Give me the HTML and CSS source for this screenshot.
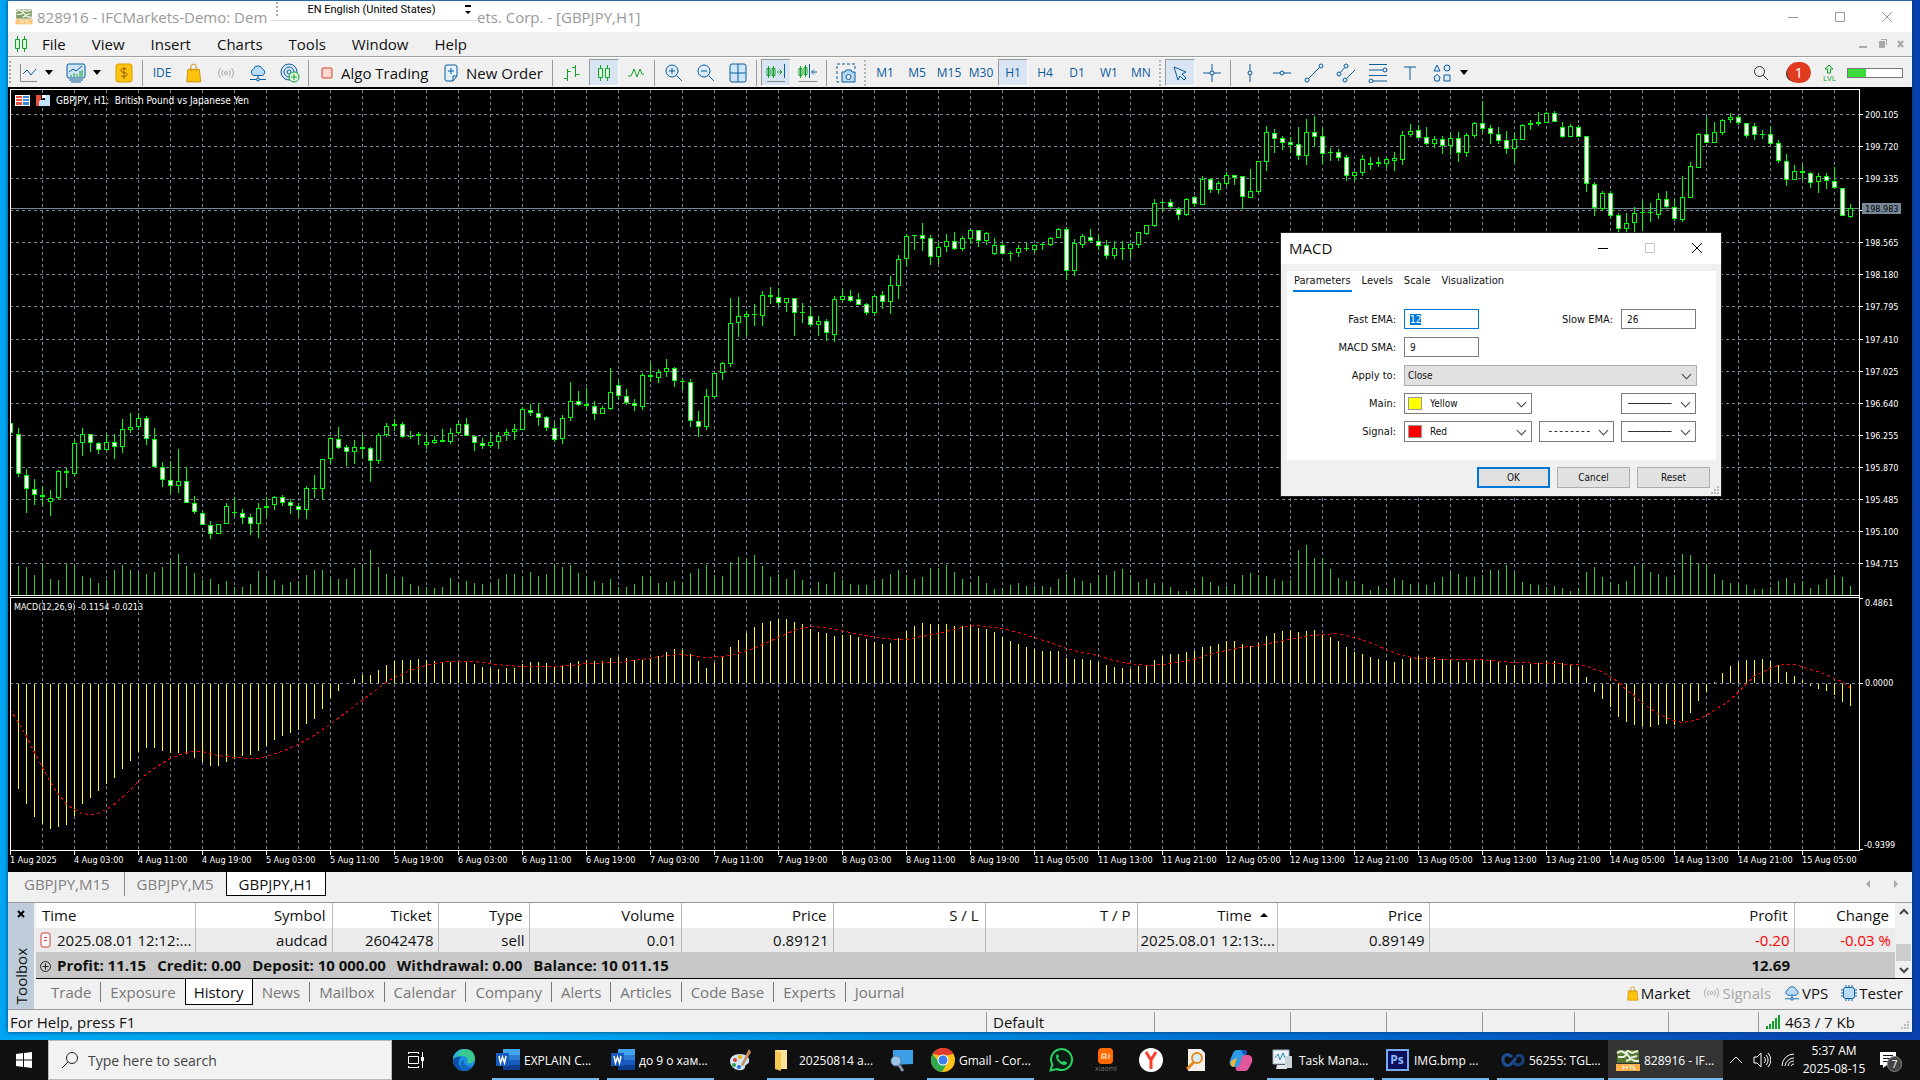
FILE: index.html
```html
<!DOCTYPE html>
<html lang="en">
<head>
<meta charset="utf-8">
<title>828916 - IFCMarkets-Demo - [GBPJPY,H1]</title>
<link rel="stylesheet" href="styles.css">
</head>
<body class="desktop">
<svg class="defs" aria-hidden="true">
  <symbol id="i-bag" viewBox="0 0 18 22"><path d="M2 7h13l1.500 14H1z" fill="#ffc20e" stroke="#c58a00"/><path d="M5.500 9V4a3 3 0 0 1 6 0v5" fill="none" stroke="#c58a00"/></symbol>
  <symbol id="i-signal" viewBox="0 0 18 14"><g fill="none" stroke="currentColor"><circle cx="9" cy="7" r="1.500"/><path d="M6 4a4.500 4.500 0 0 0 0 6M12 4a4.500 4.500 0 0 1 0 6M3.500 2a7.500 7.500 0 0 0 0 10M14.500 2a7.500 7.500 0 0 1 0 10"/></g></symbol>
  <symbol id="i-cloud" viewBox="0 0 18 18"><path d="M4.500 11.500a3.500 3.500 0 0 1 0-6.500 4.800 4.800 0 0 1 9 0 3.500 3.500 0 0 1 0 6.500z" fill="#b9dcfa" stroke="#0b62a8"/><path d="M9 11.500V15M1 15.500h16" stroke="#0b62a8"/><circle cx="9" cy="15.500" r="1.500" fill="#b9dcfa" stroke="#0b62a8"/></symbol>
  <symbol id="i-mt" viewBox="0 0 24 24"><path d="M1 2h22v13H1z" fill="#55792f"/><path d="M1 5l4-2 4 2 3-2 4 2 6-2M2 9h6l3-3 3 4 7-2M10 13l5-2 4 2h4" fill="none" stroke="#e7f0dc" stroke-width="2"/><path d="M0 16h24v7H0z" fill="#ffb04a"/><path d="M7 17.500v4M7 18l2 2 2-2v3.500M13 18h3M14.500 18v3.500M18 18h-1v2h2v1.500h-2" fill="none" stroke="#fff4dd"/></symbol>
  <symbol id="i-word" viewBox="0 0 24 24"><path d="M7 1h17v6H7z" fill="#41a5ee"/><path d="M7 7h17v5H7z" fill="#2b7cd3"/><path d="M7 12h17v5H7z" fill="#185abd"/><path d="M7 17h17v5H7z" fill="#103f91"/><path d="M0 5h13v13H0z" fill="#185abd"/><path d="M3 8l1.500 7L6.500 9l2 6L10 8" fill="none" stroke="#fff" stroke-width="1.500"/></symbol>
  <symbol id="i-candles" viewBox="0 0 14 18"><g fill="#d8ffd8" stroke="#12a12b"><path d="M3.500 1v16M10.500 1v16" /><path d="M1.500 4.500h4v9h-4zM8.500 4.500h4v9h-4z"/></g></symbol>
</svg>

<main class="app">
  <header class="titlebar">
    <svg class="ico-18"><use href="#i-mt"/></svg>
    <span class="title lead">828916 - IFCMarkets-Demo: Dem</span>
    <div class="langbar"><i class="grip"></i><span>EN English (United States)</span><svg width="6" height="12"><path d="M0 1h6v2H0zM0 7h6L3 10z"/></svg></div>
    <span class="title">ets. Corp. - [GBPJPY,H1]</span>
    <div class="win-buttons">
      <button aria-label="Minimize"><svg width="12" height="12"><path d="M1 6.500h10"/></svg></button>
      <button aria-label="Maximize"><svg width="12" height="12"><path d="M1.500 1.500h9v9h-9z"/></svg></button>
      <button aria-label="Close"><svg width="12" height="12"><path d="M1 1l10 10M11 1L1 11"/></svg></button>
    </div>
  </header>

  <nav class="menubar">
    <svg width="14" height="18"><use href="#i-candles"/></svg>
    <a href="#">File</a><a href="#">View</a><a href="#">Insert</a><a href="#">Charts</a><a href="#">Tools</a><a href="#">Window</a><a href="#">Help</a>
    <div class="mdi-buttons"><svg width="48" height="12"><path d="M1 8h8v2H1zM21 3h6v7h-6zM23 1h6v6h-1V2h-5z"/><path d="M40 3l5 6M45 3l-5 6" stroke="#a8a8a8" stroke-width="2"/></svg></div>
  </nav>

  <div class="toolbar">
    <i class="grip"></i>
    <button class="tool t30" aria-label="Chart type"><svg width="18" height="20"><path d="M1.500 1v17.500H18" stroke="#8a8a8a"/><path d="M4 11l4-4 4 5 5-6"/></svg></button>
    <span class="caret"></span>
    <button class="tool t30 t-shift" aria-label="Templates"><svg width="20" height="20"><rect x="1" y="1" width="18" height="14" rx="2" fill="#cfe6fa"/><path d="M3 9l4-3 3 2 6-5M3 17h14M5 19h10"/><path d="M5 14v-2M8 14v-4M11 14v-3M14 14V8M16 14V7" stroke="#12a12b"/></svg></button>
    <span class="caret"></span>
    <button class="tool" aria-label="Quotes"><svg width="18" height="20"><rect x="1" y="1" width="16" height="18" rx="2" fill="#ffc20e" stroke="#d79a00"/><path d="M12 6.500c-1-1.500-6-1.500-6 1s6 1.500 6 4-5 2.500-6 1M9 4v12" stroke="#8a5b00"/></svg></button>
    <i class="sep"></i>
    <button class="tool">IDE</button>
    <button class="tool" aria-label="Market"><svg width="16" height="20"><use href="#i-bag"/></svg></button>
    <button class="tool gray" aria-label="Signals"><svg width="18" height="14"><use href="#i-signal"/></svg></button>
    <button class="tool" aria-label="VPS"><svg width="18" height="18"><use href="#i-cloud"/></svg></button>
    <button class="tool" aria-label="Subscribe"><svg width="20" height="20"><circle cx="9" cy="9" r="8" fill="#dcecfb"/><circle cx="9" cy="9" r="5"/><circle cx="9" cy="9" r="2"/><circle cx="14" cy="14" r="5" fill="#e6ffe6" stroke="#12a12b"/><path d="M14 11v6M11 14h6" stroke="#12a12b"/></svg></button>
    <i class="sep"></i>
    <button class="tool wide w-algo"><svg width="12" height="12"><rect x="1" y="1" width="10" height="10" rx="1" fill="#ffd9d0" stroke="#d2402c"/></svg>Algo Trading</button>
    <button class="tool wide w-order"><svg width="14" height="18"><path d="M1 3a2 2 0 0 1 2-2h8a2 2 0 0 1 2 2v9l-4 5H3a2 2 0 0 1-2-2zM13 12H9v5" fill="#e3f1fd"/><path d="M7 4v6M4 7h6"/></svg>New Order</button>
    <i class="sep"></i>
    <button class="tool" aria-label="Bars"><svg width="18" height="18"><g stroke="#12a12b"><path d="M4.500 5v12M1 14.500h3M4.500 7.500h3M12.500 1v12M9 3.500h3M12.500 10.500h4"/></g></svg></button>
    <button class="tool on" aria-label="Candles"><svg width="14" height="18"><use href="#i-candles"/></svg></button>
    <button class="tool" aria-label="Line"><svg width="18" height="14"><path d="M1 10h3l3-7 3 8 3-8 2 5h2" stroke="#12a12b"/></svg></button>
    <i class="sep"></i>
    <button class="tool" aria-label="Zoom in"><svg width="18" height="20"><circle cx="7" cy="8" r="6" fill="#dcecfb"/><path d="M11.500 12.500L17 18M7 5v6M4 8h6"/></svg></button>
    <button class="tool" aria-label="Zoom out"><svg width="18" height="20"><circle cx="7" cy="8" r="6" fill="#dcecfb"/><path d="M11.500 12.500L17 18M4 8h6"/></svg></button>
    <button class="tool" aria-label="Tile"><svg width="18" height="20"><rect x="1" y="1" width="16" height="18" rx="2" fill="#cfe6fa"/><path d="M9 1v18M1 10h16"/></svg></button>
    <i class="sep"></i>
    <button class="tool on" aria-label="Auto scroll"><svg width="20" height="20"><g stroke="#12a12b"><path d="M2.500 3v12M1 5.500h3v7H1zM7.500 3v12M6 5.500h3v7H6zM11 9h5M13.500 6.500L16 9l-2.500 2.500"/></g><path d="M18.500 1v14"/><path d="M1 18.500h18" stroke="#8a8a8a"/></svg></button>
    <button class="tool" aria-label="Chart shift"><svg width="20" height="20"><g stroke="#12a12b"><path d="M2.500 3v12M1 5.500h3v7H1zM7.500 2v12M6 4.500h3v7H6z"/></g><path d="M11.500 1v14M19 9h-5M16 6.500L13.500 9l2.500 2.500"/><path d="M1 18.500h18" stroke="#8a8a8a"/></svg></button>
    <i class="sep"></i>
    <button class="tool" aria-label="Screenshot"><svg width="20" height="20"><path d="M19 6V1H1v18h4" stroke-dasharray="3 2"/><path d="M6 9h3l1-2h5l1 2h3v10H6z" fill="#b9dcfa"/><circle cx="12.500" cy="14" r="2.500" fill="#fff"/></svg></button>
    <i class="sep dots"></i>
    <button class="tool">M1</button><button class="tool">M5</button><button class="tool">M15</button><button class="tool">M30</button><button class="tool on">H1</button><button class="tool">H4</button><button class="tool">D1</button><button class="tool">W1</button><button class="tool">MN</button>
    <i class="sep dots"></i>
    <button class="tool on" aria-label="Cursor"><svg width="16" height="16"><path d="M2 2l12 5-4 2 4 4-2 2-4-4-2 4z" fill="#dcecfb"/></svg></button>
    <button class="tool" aria-label="Crosshair"><svg width="18" height="18"><path d="M9 0v18M0 9h18"/><circle cx="9" cy="9" r="2" fill="#dcecfb"/></svg></button>
    <i class="sep"></i>
    <button class="tool" aria-label="Vertical line"><svg width="18" height="20"><path d="M9 1v18"/><circle cx="9" cy="10" r="2" fill="#dcecfb"/></svg></button>
    <button class="tool" aria-label="Horizontal line"><svg width="20" height="18"><path d="M1 9h18"/><circle cx="10" cy="9" r="2" fill="#dcecfb"/></svg></button>
    <button class="tool" aria-label="Trendline"><svg width="20" height="20"><path d="M3 17L17 3"/><circle cx="3" cy="17" r="2" fill="#dcecfb"/><circle cx="17" cy="3" r="2" fill="#dcecfb"/></svg></button>
    <button class="tool" aria-label="Channel"><svg width="20" height="20"><path d="M3 11l7-8M9 17L19 7"/><circle cx="3" cy="11" r="2" fill="#dcecfb"/><circle cx="10" cy="3" r="2" fill="#dcecfb"/><circle cx="9" cy="17" r="2" fill="#dcecfb"/></svg></button>
    <button class="tool" aria-label="Fibonacci"><svg width="20" height="20"><path d="M1 1.500h18M1 7h18M1 12.500h18M1 18h18"/><circle cx="17" cy="7" r="2" fill="#dcecfb"/><circle cx="3" cy="18" r="2" fill="#dcecfb"/></svg></button>
    <button class="tool" aria-label="Text"><svg width="14" height="14"><path d="M1 1h12M7 1v13"/></svg></button>
    <button class="tool" aria-label="Shapes"><svg width="18" height="18"><g fill="#dcecfb"><path d="M1 7l3-6 3 6z"/><circle cx="14" cy="4" r="3"/><path d="M4 10.500l3 2.500-1 4H2l-1-4z"/><path d="M11 11h6v6h-6z"/></g></svg></button>
    <span class="caret"></span>
    <div class="tool-right">
      <svg width="16" height="16"><circle cx="6.500" cy="6.500" r="5" stroke="#333"/><path d="M10 10l5 5" stroke="#333"/></svg>
      <span class="badge">1</span>
      <span class="lvl"><svg width="12" height="10"><path d="M6 1L2 5h2.500v4h3V5H10z" fill="#d8ffd8" stroke="#12a12b"/></svg>LVL</span>
      <meter class="load" min="0" max="3" value="1">33%</meter>
    </div>
  </div>

  <section class="chart">
    <svg id="chart" class="plot" role="img" aria-label="GBPJPY H1 chart"></svg>

    <form class="dialog" onsubmit="return false">
      <div class="dlg-title"><span>MACD</span>
        <svg width="106" height="12"><path d="M1 6.500h10" stroke="#000"/><path d="M48.500 1.500h9v9h-9z" stroke="#c8c8c8"/><path d="M95 1l10 10M105 1L95 11" stroke="#000"/></svg>
      </div>
      <div class="dlg-panel">
        <div class="dlg-tabs"><a class="cur" href="#">Parameters</a><a href="#">Levels</a><a href="#">Scale</a><a href="#">Visualization</a></div>
        <div class="dlg-grid">
          <label for="fast">Fast EMA:</label><input class="field" id="fast" value="12" autofocus>
          <label for="slow" class="c3">Slow EMA:</label><input class="field" id="slow" value="26">
          <label for="sma">MACD SMA:</label><input class="field c2" id="sma" value="9">
          <label for="apply" class="c1">Apply to:</label><div class="combo span3 filled"><select id="apply"><option>Close</option></select></div>
          <label for="main" class="c1">Main:</label><div class="combo sw"><i class="swatch yellow"></i><select id="main"><option>Yellow</option></select></div>
          <div class="combo c4"><select aria-label="Main width"><option>────────</option></select></div>
          <label for="sig" class="c1">Signal:</label><div class="combo sw"><i class="swatch red"></i><select id="sig"><option>Red</option></select></div>
          <div class="combo"><select aria-label="Signal style"><option>╶╶╶╶╶╶╶╶</option></select></div>
          <div class="combo"><select aria-label="Signal width"><option>────────</option></select></div>
        </div>
      </div>
      <div class="dlg-foot"><button class="btn primary">OK</button><button class="btn">Cancel</button><button class="btn">Reset</button></div>
      <svg class="gripper" width="9" height="9"><path d="M6 0h2v2H6zM3 3h2v2H3zM6 3h2v2H6zM0 6h2v2H0zM3 6h2v2H3zM6 6h2v2H6z" fill="#bbb"/></svg>
    </form>
  </section>

  <nav class="chart-tabs">
    <a href="#">GBPJPY,M15</a><a href="#">GBPJPY,M5</a><a class="cur" href="#">GBPJPY,H1</a>
    <svg width="36" height="10"><path d="M5 1v8L1 5zM29 1v8l4-4z" fill="#a8a8a8"/></svg>
  </nav>

  <section class="toolbox">
    <aside class="tb-strip"><button aria-label="Close toolbox"><svg width="8" height="8"><path d="M1 1l6 6M7 1L1 7" stroke="#000" stroke-width="2"/></svg></button><span>Toolbox</span></aside>
    <div class="tb-main">
      <div class="tb-data">
        <table class="deals">
          <colgroup><col class="w159"><col class="w137"><col class="w106"><col class="w91"><col class="w152"><col class="w152"><col class="w152"><col class="w152"><col class="w140"><col class="w152"><col><col class="w101"></colgroup>
          <thead><tr><th class="l">Time</th><th>Symbol</th><th>Ticket</th><th>Type</th><th>Volume</th><th>Price</th><th>S / L</th><th>T / P</th><th>Time <span class="sort"></span></th><th>Price</th><th>Profit</th><th>Change</th></tr></thead>
          <tbody>
            <tr><td class="l"><svg width="12" height="16"><rect x="1" y="1" width="9" height="14" rx="2" fill="#fff" stroke="#d23a3a"/><path d="M4 5.500h3M4 8.500h3" stroke="#d23a3a"/></svg>2025.08.01 12:12:...</td><td>audcad</td><td>26042478</td><td>sell</td><td>0.01</td><td>0.89121</td><td></td><td></td><td class="tight">2025.08.01 12:13:...</td><td>0.89149</td><td class="neg">-0.20</td><td class="neg">-0.03 %</td></tr>
            <tr class="sum"><td colspan="10" class="l"><svg width="12" height="12"><g fill="none" stroke="#222"><circle cx="5.500" cy="5.500" r="5"/><path d="M5.500 2.500v6M2.500 5.500h6"/></g></svg><span>Profit: 11.15</span><span>Credit: 0.00</span><span>Deposit: 10 000.00</span><span>Withdrawal: 0.00</span><span>Balance: 10 011.15</span></td><td>12.69</td><td></td></tr>
          </tbody>
        </table>
        <div class="scroll"><svg width="10" height="8"><path d="M1 6l4-4 4 4"/></svg><i></i><svg width="10" height="8"><path d="M1 2l4 4 4-4"/></svg></div>
      </div>
      <nav class="tb-tabs">
        <a href="#">Trade</a><a href="#">Exposure</a><a class="cur" href="#">History</a><a href="#">News</a><a href="#">Mailbox</a><a href="#">Calendar</a><a href="#">Company</a><a href="#">Alerts</a><a href="#">Articles</a><a href="#">Code Base</a><a href="#">Experts</a><a href="#">Journal</a>
        <div class="tb-links">
          <button><svg width="12" height="15"><use href="#i-bag"/></svg>Market</button>
          <button class="gray"><svg width="17" height="14"><use href="#i-signal"/></svg>Signals</button>
          <button><svg width="16" height="16"><use href="#i-cloud"/></svg>VPS</button>
          <button><svg width="16" height="16"><path d="M5 0v16M8 0v16M11 0v16M0 5h16M0 8h16M0 11h16" stroke="#0b62a8"/><rect x="2.500" y="2.500" width="11" height="11" rx="2" fill="#b9dcfa" stroke="#0b62a8"/></svg>Tester</button>
        </div>
      </nav>
    </div>
  </section>

  <footer class="status">
    <span class="grow">For Help, press F1</span><span class="s168">Default</span><span class="s136"></span><span class="s96"></span><span class="s96"></span><span class="s92"></span><span class="s94"></span><span class="s90"></span>
    <span class="s154"><svg width="16" height="14"><path d="M1 11h2v3H1zM4 9h2v5H4zM7 6h2v8H7zM10 3h2v11h-2zM13 0h2v14h-2z" fill="#12a12b"/></svg>463 / 7 Kb<svg class="push" width="9" height="9"><path d="M6 0h2v2H6zM3 3h2v2H3zM6 3h2v2H6zM0 6h2v2H0zM3 6h2v2H3zM6 6h2v2H6z" fill="#bbb"/></svg></span>
  </footer>
</main>

<footer class="taskbar">
  <button class="start" aria-label="Start"><svg width="16" height="16" fill="#fff"><path d="M0 2l7-1v6.500H0zM8 1l8-1v7.500H8zM0 8.500h7V15l-7-1zM8 8.500h8V16l-8-1z"/></svg></button>
  <label class="search"><svg width="18" height="18"><circle cx="11" cy="7" r="5.500" fill="none" stroke="#222"/><path d="M7 11l-6 6" stroke="#222"/></svg><input placeholder="Type here to search"></label>
  <button class="task t48" aria-label="Task view"><svg width="18" height="16"><g fill="none" stroke="#fff"><path d="M1 .5h11M1 15.500h11M1.500 0v2M11.500 0v2M1.500 14v2M11.500 14v2M1.500 4.500h10v7h-10zM15.500 0v16"/></g><path d="M14 5h3v4h-3z" fill="#fff"/></svg></button>
  <button class="task t48" aria-label="Edge"><svg width="24" height="24"><circle cx="12" cy="12" r="11" fill="#1b8fe0"/><path d="M1 11C2 4 8 1 13 1c7 0 10 5 10 9 0 4-4 6-8 5 2-3 0-7-5-7-4 0-8 1-9 3z" fill="#39c98f"/><path d="M1 10C3 4 8 1 12 1c-3 1-6 3-6 7-2 0-4 1-5 2z" fill="#27b3d8"/><path d="M9 9c-4 3-3 11 4 14-7 0-12-5-12-11 2-3 6-4 8-3z" fill="#0e4fa6"/><path d="M12 12c-1 4 3 8 9 6-2 3-5 5-9 5-5-3-4-10 0-11z" fill="#1464c0"/></svg></button>
  <button class="task lab"><svg width="24" height="24"><use href="#i-word"/></svg>EXPLAIN C...</button>
  <button class="task lab"><svg width="24" height="24"><use href="#i-word"/></svg>до 9 о хам...</button>
  <button class="task" aria-label="Paint"><svg width="24" height="24"><path d="M11 6c7 0 10 4 9 8-1 3-4 2-4 5 0 2-3 4-7 3-5-1-8-5-8-9 0-4 4-7 10-7z" fill="#cfe3f2"/><circle cx="6" cy="12" r="2" fill="#e23b2e"/><circle cx="11" cy="9" r="2" fill="#f0b400"/><circle cx="5" cy="17" r="2" fill="#2da44e"/><circle cx="10" cy="19" r="2" fill="#2f6fdb"/><path d="M20 1l2 3-8 14-2-1z" fill="#c98d55"/></svg></button>
  <button class="task lab"><svg width="24" height="24"><path d="M4 2h12v19H4z" fill="#ffe29a"/><path d="M4 2l6 3v18l-6-2z" fill="#f3c84f"/></svg>20250814 a...</button>
  <button class="task" aria-label="Search tool"><svg width="24" height="24"><path d="M4 2h20v14l-20 1z" fill="#3d9fe8"/><circle cx="7" cy="13" r="5" fill="#9cc7ea" stroke="#5e7d99"/><path d="M10 17l4 6" stroke="#8397a8" stroke-width="3"/></svg></button>
  <button class="task lab"><svg width="24" height="24"><circle cx="12" cy="12" r="12" fill="#fbc116"/><path d="M1.600 6A12 12 0 0 1 22.400 6L12 8z" fill="#e33b2e"/><path d="M12 0a12 12 0 0 1 10.400 6H12z" fill="#e33b2e"/><path d="M1.600 6A12 12 0 0 0 11 24l4-7-7-3z" fill="#2da94f"/><circle cx="12" cy="12" r="5.500" fill="#fff"/><circle cx="12" cy="12" r="4.500" fill="#3b7ded"/></svg>Gmail - Cor...</button>
  <button class="task" aria-label="WhatsApp"><svg width="24" height="24"><path d="M1.500 22.500l1.800-6A10.500 10.500 0 1 1 8 21z" fill="#0b1d12" stroke="#25d366" stroke-width="2"/><path d="M8 6c-3 3 2 11 8 11 3-1 2-3 1-3l-2-1-2 1c-2-1-3-2-4-4l1-2z" fill="#25d366"/></svg></button>
  <button class="task" aria-label="Xiaomi"><svg width="24" height="24"><rect x="4" y="0" width="15" height="16" rx="4" fill="#ff6900"/><path d="M8 11V6h4v5M10 8v3M15 6v5" fill="none" stroke="#fff"/><text x="12" y="23" class="mi">xiaomi</text></svg></button>
  <button class="task" aria-label="Yandex"><svg width="24" height="24"><circle cx="12" cy="12" r="12" fill="#fff"/><path d="M7 4l5 8 5-8M12 12v9" fill="none" stroke="#f8402a" stroke-width="3"/></svg></button>
  <button class="task" aria-label="Document search"><svg width="24" height="24"><path d="M4 1h13l4 4v18H4z" fill="#f4f1ea"/><circle cx="13" cy="10" r="5" fill="#d9ecfa" stroke="#e58a1f" stroke-width="2"/><path d="M10 14l-7 7" stroke="#e58a1f" stroke-width="3"/></svg></button>
  <button class="task" aria-label="Copilot"><svg width="24" height="24"><path d="M8 2h7c2 0 3 2 3 4l-3 1-4 12H5c-4 0-5-4-4-7L4 5c1-2 2-3 4-3z" fill="#2b9be8"/><path d="M16 7h3c4 0 5 4 4 7l-3 6c-1 2-2 3-4 3H9c-2 0-3-2-2-4l3-1 3-9c1-1 1-2 3-2z" fill="#e0589a"/><path d="M2 13l6-3-3 9c-3 0-4-3-3-6z" fill="#f2b632"/><path d="M12 2h4c2 0 2 2 2 4h-4z" fill="#1b4fc4"/></svg></button>
  <button class="task lab"><svg width="24" height="24"><path d="M2 2h16v14H2z" fill="#eaf2f7" stroke="#9fb0ba"/><path d="M4 10l3-4 2 6 3-7 2 5h3" fill="none" stroke="#2c8ac4"/><path d="M14 8h7v12h-7z" fill="#c9d3d9"/><path d="M6 17h9l1 4H5z" fill="#dfe6ea"/></svg>Task Mana...</button>
  <button class="task lab"><svg width="24" height="24"><path d="M1 2h21v20H1z" fill="#0b0f5c" stroke="#79a8f5" stroke-width="2"/><text x="11" y="16" class="ps">Ps</text></svg>IMG.bmp ...</button>
  <button class="task lab"><svg width="24" height="24"><g fill="none" stroke-width="3"><path d="M11 9C6 4 1 8 2 13s6 6 9 2l4-5" stroke="#1e4f96"/><path d="M12 14c4 5 9 3 10-1s-3-8-7-4" stroke="#17407c"/></g></svg>56255: TGL...</button>
  <button class="task lab active"><svg width="24" height="24"><use href="#i-mt"/></svg>828916 - IF...</button>
  <div class="tray">
    <svg width="14" height="10"><path d="M1 8l6-6 6 6"/></svg>
    <svg width="18" height="16"><path d="M1 5h3l4-4v14l-4-4H1zM11 5a4 4 0 0 1 0 6M13 3a7 7 0 0 1 0 10M15 1a10 10 0 0 1 0 14"/></svg>
    <svg width="14" height="14"><path d="M1 13A12 12 0 0 1 13 1M4 13a9 9 0 0 1 9-8M7 13a6 6 0 0 1 6-5M10 13a3 3 0 0 1 3-2"/></svg>
    <time>5:37 AM<br>2025-08-15</time>
    <div class="note"><svg width="18" height="18"><path d="M1 1h16v13H8l-4 3v-3H1z" fill="#fff"/><path d="M4 4.500h10M4 7.500h10M4 10.500h6" stroke="#111"/></svg><span>7</span></div>
  </div>
</footer>
<script src="chart.js"></script>
</body>
</html>
```
FILE: styles.css
```css
* { box-sizing: border-box; }
body, button, input, select, table { font-family: "Open Sans", "Noto Sans", sans-serif; font-size: 15px; color: #111; }
button { border: 0; background: none; padding: 0; }
a { color: inherit; text-decoration: none; }
svg { flex: none; display: block; }
.defs { display: none; }
.desktop { margin: 0; min-height: 100vh; display: flex; flex-direction: column; background: linear-gradient(90deg, #00a6f2 0, #00a4ee 30%, #0078d4 60%, #0a3fb0 100%); }

.app { flex: 1; margin: 0 8px 8px; display: flex; flex-direction: column; background: #f0f0f0; border-top: 1px solid #2a6ca3; box-shadow: 0 0 4px #003a6c; }
.titlebar { display: flex; align-items: center; height: 31px; padding-left: 7px; background: #fff; }
.ico-18 { width: 18px; height: 17px; opacity: .75; margin-right: 4px; }
.title { flex: 1; color: #999; white-space: nowrap; line-height: 28px; }
.title.lead { flex: none; width: 234px; }
.win-buttons { display: flex; padding-right: 2px; }
.win-buttons button { width: 47px; display: grid; place-items: center; }
.win-buttons path { fill: none; stroke: #999; }
.langbar { align-self: flex-start; width: 206px; height: 20px; padding: 0 6px 2px 5px; display: flex; align-items: center; justify-content: space-between; background: #fff; border-bottom: 1px solid #ddd; font: 11px Roboto, sans-serif; color: #000; }
.langbar .grip { height: 16px; }
.grip { width: 2px; height: 24px; background: repeating-linear-gradient(#aaa 0 2px, transparent 2px 4px); }

.menubar { display: flex; align-items: center; height: 25px; padding-left: 6px; border-bottom: 1px solid #9e9e9e; }
.menubar a { margin-left: 14px; margin-right: 12px; }
.mdi-buttons { margin-left: auto; padding-right: 6px; }
.mdi-buttons path { fill: #a8a8a8; }

.toolbar { display: flex; align-items: center; height: 30px; border-top: 1px solid #fff; padding-left: 1px; }
.tool { flex: none; width: 30px; height: 27px; margin: 0 1px; display: flex; align-items: center; justify-content: center; color: #0b5c9c; font-size: 12px; }
.tool svg, .tool-right svg { fill: none; stroke: #0b5c9c; }
.tool.t30 { width: 28px; margin-left: 3px; }
.tool.t-shift { margin-left: 6px; width: 29px; }
.tool.on { background: #d9e5f2; border: 1px solid; border-color: #999 #fff #fff #999; }
.tool.gray { color: #a8a8a8; }
.tool.gray svg { stroke: none; }
.tool.wide { color: #111; font-size: 15px; justify-content: flex-start; padding-left: 8px; gap: 8px; }
.w-algo { width: 121px; }
.w-order { width: 113px; }
.caret { flex: none; width: 12px; height: 6px; display: grid; place-items: center; }
.caret::before { content: ""; border: 4px solid transparent; border-top: 5px solid #000; border-bottom: 0; }
.caret + .tool:not(.t-shift) { margin-left: 6px; }
.sep { flex: none; width: 6px; height: 26px; background: linear-gradient(90deg, transparent 2px, #999 2px 3px, transparent 3px); }
.sep.dots { width: 7px; background: repeating-linear-gradient(#b5b5b5 0 2px, #f0f0f0 2px 4px) 2px 0 / 2px 100% no-repeat; }
.tool-right { margin-left: auto; display: flex; align-items: center; gap: 16px; padding-right: 9px; }
.badge { width: 24px; height: 21px; border-radius: 11px; margin-left: 2px; background: #e03a20; color: #fff; text-align: center; line-height: 21px; box-shadow: -3px 1px 0 -2px #333; }
.lvl { display: grid; justify-items: center; font: 8px/8px "Open Sans", sans-serif; color: #12a12b; margin-left: -4px; }
.load { appearance: none; width: 56px; height: 10px; border: 1px solid #777; background: linear-gradient(#3ddc3d, #3ddc3d) 0 0 / 34% 100% no-repeat #fff; margin-left: -5px; display: block; }
.load::-webkit-meter-inner-element { display: none; }

.chart { position: relative; flex: 1; min-height: 785px; background: #000; overflow: hidden; }
.plot { width: 100%; height: 785px; }
.plot text { font: 9px "DejaVu Sans Condensed", "DejaVu Sans", sans-serif; fill: #fff; }
.plot .mark { fill: #000; }
.plot .symbol { font-size: 10px; }

.dialog, .dialog input, .dialog select, .dialog button { font: 10px "DejaVu Sans Condensed", "DejaVu Sans", sans-serif; }
.dialog { position: absolute; right: 191px; top: 146px; width: 440px; background: #f0f0f0; outline: 1px solid #222; color: #111; }
.dlg-title { height: 31px; padding: 0 18px 2px 8px; display: flex; align-items: center; justify-content: space-between; background: #fff; font: 15px "Open Sans", sans-serif; }
.dlg-title path { fill: none; }
.dlg-panel { margin: 7px 5px 0 6px; padding: 2px 0 18px; background: #fff; }
.dlg-tabs { display: flex; gap: 9px; padding-left: 6px; height: 19px; line-height: 16px; font-size: 11px; }
.dlg-tabs a { padding: 0 1px; }
.dlg-tabs .cur { border-bottom: 2px solid #0078d7; }
.dlg-grid { display: grid; grid-template-columns: 109px 128px 75px 75px; gap: 7px; margin-top: 17px; padding-left: 1px; grid-auto-rows: 21px; }
.dlg-grid label { text-align: right; line-height: 22px; font-size: 11px; padding-right: 1px; }
.field { width: 75px; height: 20px; border: 1px solid #7a7a7a; padding: 0 5px; outline: 0; }
.field:focus { border-color: #0078d7; }
.field::selection { background: #0078d7; color: #fff; }
.c1 { grid-column: 1; }
.c2, .sw { grid-column: 2; }
.c3 { grid-column: 3; }
.c4 { grid-column: 4; }
.span3 { grid-column: 2 / 5; }
.combo { position: relative; display: flex; align-items: center; height: 21px; border: 1px solid #7a7a7a; background: #fff; padding-left: 3px; }
.combo::after { content: ""; position: absolute; right: 6px; top: 5px; width: 6px; height: 6px; border: solid #444; border-width: 0 1px 1px 0; transform: rotate(45deg); pointer-events: none; }
.combo select { appearance: none; flex: 1; min-width: 0; border: 0; padding: 0 18px 0 0; background: none; }
.combo:not(.filled):not(.sw) { padding-left: 6px; }
.filled { background: #e1e1e1; border-color: #adadad; width: 293px; }
.swatch { width: 14px; height: 13px; border: 1px solid #999; margin-right: 8px; }
.yellow { background: #ff0; }
.red { background: #f00; }
.dlg-foot { display: flex; justify-content: flex-end; gap: 7px; padding: 7px 11px 8px; }
.gripper { position: absolute; right: 1px; bottom: 1px; }
.btn { width: 73px; height: 21px; background: #e1e1e1; border: 1px solid #adadad; }
.btn.primary { border: 2px solid #0078d7; }

.chart-tabs { display: flex; height: 30px; padding-left: 6px; color: #808080; line-height: 24px; }
.chart-tabs a { height: 24px; padding: 0 10px; }
.chart-tabs a:first-child { border-right: 1px solid #888; padding-right: 14px; }
.chart-tabs a + a { padding: 0 12px; }
.chart-tabs .cur { background: #fff; border: 1px solid #000; border-top: 0; color: #111; }
.chart-tabs svg { margin: 7px 11px 0 auto; }

.toolbox { display: flex; border-top: 1px solid #999; height: 107px; }
.tb-strip { flex: none; width: 26px; background: #bfcddb; display: flex; flex-direction: column; align-items: center; justify-content: space-between; padding: 7px 0 5px; margin-right: 2px; }
.tb-strip span { writing-mode: vertical-rl; transform: rotate(180deg); font-size: 15px; line-height: 20px; }
.tb-main { flex: 1; min-width: 0; display: flex; flex-direction: column; }
.tb-data { display: flex; border-bottom: 1px solid #000; }
.deals { flex: 1; width: 100%; table-layout: fixed; border-collapse: collapse; }
.deals th, .deals td { padding: 0 4px; text-align: right; font-weight: 400; white-space: nowrap; line-height: 24px; height: 24px; overflow: hidden; border-right: 1px solid #bbb; }
.deals th { background: #fff; padding: 0 6px; line-height: 25px; height: 25px; }
.deals th:last-child, .deals td:last-child { border-right: 0; }
.deals td { background: #ebebeb; }
.deals .l { text-align: left; }
.deals td.tight { padding: 0 3px; }
.deals td svg { display: inline-block; vertical-align: -2px; margin-right: 5px; }
.deals .neg { color: #f00; }
.deals .sum td { background: #c8c8c8; border: 0; font-weight: 700; line-height: 26px; height: 26px; }
.sum span + span { margin-left: 11px; }
.sort { display: inline-block; margin: 0 3px 4px 4px; border: 4px solid transparent; border-bottom-color: #000; border-top: 0; }
.w159 { width: 159px; } .w137 { width: 137px; } .w106 { width: 106px; } .w91 { width: 91px; } .w152 { width: 152px; } .w140 { width: 140px; } .w101 { width: 101px; }
.scroll { width: 17px; display: flex; flex-direction: column; align-items: center; justify-content: space-between; padding: 5px 0 4px; }
.scroll path { fill: none; stroke: #444; stroke-width: 2; }
.scroll i { width: 15px; height: 17px; background: #cdcdcd; margin-top: 22px; }
.tb-tabs { display: flex; color: #777; }
.tb-tabs > a { padding: 0 9px; line-height: 20px; height: 20px; margin-top: 3px; border-right: 1px solid #777; }
.tb-tabs > a:first-child { padding-left: 15px; }
.tb-tabs > a:nth-child(2), .tb-tabs > a:nth-child(12) { border-right-color: transparent; }
.tb-tabs > a.cur { margin-top: 0; margin-left: -1px; height: 26px; line-height: 26px; color: #111; background: #fff; border: 1px solid #000; border-top: 0; padding: 0 8px; }
.tb-links { margin-left: auto; display: flex; gap: 13px; align-items: center; padding: 2px 9px 0 0; }
.tb-links button { display: flex; align-items: center; gap: 2px; line-height: 22px; }
.tb-links .gray { color: #a8a8a8; }

.status { display: flex; height: 23px; border-top: 1px solid #999; padding-top: 2px; line-height: 20px; padding-left: 2px; }
.status span { border-left: 1px solid #999; padding-left: 6px; display: flex; gap: 4px; align-items: center; white-space: nowrap; overflow: hidden; }
.status .grow { flex: 1; border: 0; padding: 0; }
.push { margin: auto 2px 2px auto; }
.s168 { width: 168px; } .s136 { width: 136px; } .s96 { width: 96px; } .s92 { width: 92px; } .s94 { width: 94px; } .s90 { width: 90px; } .s154 { width: 154px; }

.taskbar { display: flex; height: 40px; background: #101010; overflow: hidden; }
.start { width: 48px; display: grid; place-items: center; }
.search { width: 344px; background: #f2f2f2; border: 1px solid #bbb; display: flex; align-items: center; padding-left: 12px; gap: 9px; }
.search input { border: 0; background: none; flex: 1; min-width: 0; font-size: 14px; padding: 0; }
.search input::placeholder { color: #444; }
.task { flex: none; width: 45px; display: flex; align-items: center; justify-content: center; color: #fff; font-size: 12px; white-space: nowrap; }
.t48 { width: 48px; }
.lab { width: 115px; justify-content: flex-start; padding-left: 8px; gap: 4px; background: linear-gradient(#76b9ed, #76b9ed) 4px 38px / 107px 2px no-repeat; }
.lab.active { background: linear-gradient(#76b9ed, #76b9ed) 0 38px / 100% 2px no-repeat #333; }
.mi { font: 7px "Open Sans", sans-serif; fill: #777; text-anchor: middle; }
.ps { font: bold 12px "Open Sans", sans-serif; fill: #8db8ff; text-anchor: middle; }
.tray { margin-left: auto; display: flex; align-items: center; gap: 10px; padding-right: 18px; color: #fff; }
.tray > svg path { fill: none; stroke: #fff; }
.tray time { width: 66px; margin-left: -4px; text-align: center; font-size: 12px; line-height: 18px; }
.note { position: relative; margin-left: 2px; padding-right: 5px; }
.note span { position: absolute; right: 0; top: 5px; width: 15px; height: 16px; border-radius: 8px; background: #444; border: 1px solid #888; font-size: 10px; line-height: 14px; text-align: center; }
```
FILE: chart.js
```js
// Each candle: wick top, body top, body bottom, wick bottom, kind (f = falling, r = rising)
const candles = `
423 423 433 433 f,428 434 474 477 f,469 475 489 513 f,479 489 495 505 f,486 495 497 505 f,490 498 502 516 r,470 471 498 500 r,468 471 473 488 f,440 443 474 476 r,428 434 443 456 r,
434 434 443 452 f,442 443 450 454 f,434 442 450 451 r,434 442 447 459 f,419 429 447 453 r,413 427 430 433 r,413 418 427 430 r,416 418 439 445 f,428 439 467 468 f,462 467 480 487 f,
461 480 486 493 f,449 481 486 493 r,467 481 503 503 f,496 503 512 514 f,511 513 525 525 f,521 525 534 539 f,524 524 534 534 r,503 506 524 524 r,497 512 513 517 f,509 513 518 524 f,
514 517 524 535 f,503 508 524 538 r,497 506 508 517 r,496 497 505 510 r,495 497 503 506 f,499 502 506 514 f,503 506 510 517 f,486 488 510 519 r,475 488 489 498 f,459 459 489 499 r,
437 438 459 464 r,427 439 448 449 f,445 447 452 466 f,440 447 452 464 r,435 447 449 458 f,447 448 461 482 f,433 435 461 464 r,423 426 435 437 r,419 424 426 431 r,422 424 437 438 f,
431 436 437 439 f,432 434 436 445 r,434 442 445 449 r,436 440 443 444 r,429 440 442 442 f,428 433 442 444 r,421 424 433 435 r,418 424 436 436 f,436 436 443 451 f,438 443 446 449 f,
433 442 446 448 r,432 436 442 449 r,429 432 435 441 r,424 429 432 440 r,407 409 430 430 r,404 410 413 416 f,403 413 418 426 f,416 417 428 431 f,423 428 440 442 f,415 418 439 444 r,
382 401 418 421 r,391 401 405 406 f,388 404 406 409 f,401 406 414 420 f,406 408 414 414 r,368 392 409 410 r,381 385 396 400 f,389 396 403 405 f,399 403 406 411 f,373 375 407 410 r,
363 375 377 382 f,369 372 378 383 r,359 368 372 377 r,367 368 381 387 f,378 381 382 390 f,379 382 421 427 f,411 421 427 437 f,389 396 427 430 r,372 373 397 398 r,362 363 373 380 r,
298 323 364 367 r,297 316 323 337 r,311 314 317 336 r,304 314 315 326 f,291 295 316 326 r,287 295 297 304 f,288 297 303 306 f,298 298 303 312 r,298 298 313 336 f,303 312 312 323 f,
306 316 325 327 f,316 321 325 336 r,319 321 333 341 f,296 299 335 342 r,289 296 300 302 r,290 296 301 302 f,293 299 305 305 f,303 304 313 315 f,294 296 313 316 r,291 295 302 309 f,
276 285 302 314 r,255 259 286 299 r,234 236 259 266 r,235 235 236 250 f,223 235 239 251 f,235 238 257 265 f,242 247 257 264 r,234 241 247 252 r,232 241 249 250 f,236 238 249 251 r,
229 230 239 244 r,230 230 241 247 f,232 233 241 245 r,238 245 254 255 r,242 245 254 254 f,251 253 253 261 f,245 248 253 257 r,243 248 249 251 f,244 245 250 253 r,243 244 245 250 f,
237 238 245 246 r,228 229 238 238 r,227 229 271 280 f,239 243 271 276 r,234 236 245 248 r,229 237 241 242 f,235 241 246 250 f,240 245 256 259 f,241 248 256 259 r,241 248 248 260 f,
243 244 249 258 r,232 232 245 248 r,225 225 234 235 r,199 203 226 227 r,201 202 203 211 f,199 202 207 209 f,207 209 215 220 f,198 199 215 216 r,196 197 204 207 f,176 179 205 205 r,
178 179 190 193 f,181 183 190 194 r,172 175 184 186 r,175 175 178 185 f,176 176 197 209 f,169 191 198 198 r,161 161 192 194 r,126 132 162 171 r,129 133 139 153 f,136 138 143 150 f,
137 142 145 153 f,127 144 156 160 f,119 132 156 165 r,116 132 137 147 f,128 136 154 164 f,148 152 153 161 f,149 152 158 161 f,155 157 176 181 f,171 172 176 181 r,155 159 173 176 r,
157 163 165 170 r,157 162 164 167 f,157 159 164 168 r,152 158 161 171 r,131 135 160 165 r,124 131 135 137 r,125 130 138 138 f,127 137 144 145 f,136 139 144 148 r,136 139 146 154 f,
133 138 146 155 r,132 138 153 162 f,133 135 153 157 r,122 123 136 138 r,101 123 129 133 f,125 128 134 144 f,127 134 141 144 f,131 140 149 154 f,133 139 149 163 r,124 125 140 140 r,
120 123 125 130 r,112 122 124 126 f,112 113 123 123 r,111 113 122 122 f,122 127 137 138 f,124 126 137 137 r,125 127 137 137 f,136 136 184 192 f,182 184 208 216 f,191 193 209 211 r,
191 193 216 218 f,213 215 229 233 f,213 223 229 232 r,207 213 223 233 r,201 212 213 231 f,203 212 213 222 f,193 199 215 219 r,191 199 207 209 f,199 207 219 221 f,176 197 220 222 r,
162 166 198 198 r,133 134 168 168 r,117 134 143 143 f,122 132 143 143 r,119 120 133 135 r,113 117 120 123 r,115 117 123 125 f,123 123 136 138 f,123 126 135 140 f,130 134 135 139 f,
126 134 144 144 f,140 143 161 163 f,154 161 180 186 f,165 171 180 180 r,165 171 173 180 f,172 173 183 188 f,173 176 182 193 r,173 176 181 189 f,167 181 188 189 f,188 188 216 216 f,
204 208 217 218 r`.split(",").map(s => s.trim().split(" "));

const volume = [0,29,28,20,31,16,15,32,31,19,17,12,15,25,30,25,22,21,23,28,36,41,29,22,15,16,11,14,8,8,11,24,18,15,10,13,14,20,25,25,
17,16,16,27,30,45,28,21,16,18,11,9,8,7,8,17,12,14,12,11,10,16,21,21,18,23,19,21,31,28,30,22,18,14,12,16,8,8,11,19,
19,12,13,14,13,22,26,30,20,19,33,38,37,40,29,18,21,16,25,15,6,13,11,23,15,11,10,10,15,16,21,25,20,16,18,27,27,30,23,16,
12,19,12,6,7,10,12,9,9,9,8,16,21,17,14,12,20,20,24,26,20,13,16,12,10,8,4,4,7,18,13,9,9,11,20,22,20,19,16,14,
15,45,50,37,37,26,17,14,14,11,5,9,7,17,15,11,10,10,13,18,22,21,18,18,20,25,25,30,22,13,11,10,8,9,7,4,7,23,28,18,
13,11,14,29,31,23,21,18,20,41,40,31,31,21,15,12,12,10,6,6,8,14,17,12,14,7,10,16,20,18,9];

const macd = [0,-105,-120,-133,-140,-145,-143,-141,-132,-120,-114,-107,-100,-94,-85,-77,-68,-64,-64,-67,-69,-69,-70,-74,-78,-82,-82,-78,-75,-72,-71,-67,-62,-56,-52,-49,-46,-40,-35,-25,
-14,-7,0,4,8,8,13,18,22,23,23,24,23,22,20,21,21,21,19,16,15,14,15,15,19,21,21,20,17,17,20,22,23,22,22,25,26,25,23,23,
24,27,31,34,33,29,22,15,20,27,36,43,50,56,60,62,64,64,61,59,54,51,50,47,48,48,46,44,41,39,40,45,52,57,60,59,59,59,57,57,
57,55,54,51,46,42,39,36,34,32,32,32,25,24,24,23,21,18,16,15,14,17,18,23,27,29,29,31,32,36,37,39,42,42,39,37,40,47,50,52,
53,51,52,53,49,46,42,36,31,29,26,24,22,21,24,26,27,26,26,24,24,21,21,23,24,23,21,18,18,18,19,20,22,22,20,18,16,6,-8,-15,
-23,-33,-38,-41,-42,-43,-41,-40,-41,-37,-29,-17,-8,1,10,17,21,23,23,24,22,18,11,7,3,-2,-5,-7,-11,-18,-22];

// Signal line as bar index, value
const signal = [0,-26,1,-38,2,-52,3,-68,4,-83,5,-98,6,-110,7,-120,8,-126,9,-130,10,-131,11,-130,12,-126,13,-121,14,-114,15,-107,16,-98,17,-91,18,-85,20,-75,21,-72,22,-69,23,-68,24,-68,25,-70,26,-72,28,-74,30,-75,31,-75,32,-73,34,-68,36,-61,38,-52,40,-41,42,-29,44,-17,46,-5,47,1,48,6,49,9,50,13,51,16,52,18,53,20,54,21,55,22,58,22,60,20,62,18,64,17,68,17,70,18,72,20,76,21,79,24,82,28,84,29,87,26,90,28,93,35,96,46,98,53,100,57,102,56,105,51,109,45,111,44,112,44,114,47,116,50,118,54,120,58,121,58,123,56,124,55,126,51,128,46,130,41,132,35,134,31,136,28,138,23,140,20,142,18,144,19,146,21,148,24,150,29,152,33,154,36,156,38,158,41,160,44,162,47,164,49,166,50,168,46,170,41,172,34,174,28,176,25,180,24,184,24,188,21,192,20,196,19,197,18,198,14,199,12,200,7,201,2,202,-6,203,-12,204,-19,205,-25,206,-30,207,-34,208,-37,209,-39,210,-38,211,-36,212,-32,213,-27,214,-22,215,-17,216,-9,217,-1,218,7,219,11,220,15,221,18,222,19,223,19,224,17,225,14,226,12,227,9,228,5,229,2,230,-4];

const times = ["1 Aug 2025","4 Aug 03:00","4 Aug 11:00","4 Aug 19:00","5 Aug 03:00","5 Aug 11:00","5 Aug 19:00","6 Aug 03:00","6 Aug 11:00","6 Aug 19:00","7 Aug 03:00","7 Aug 11:00","7 Aug 19:00","8 Aug 03:00","8 Aug 11:00","8 Aug 19:00","11 Aug 05:00","11 Aug 13:00","11 Aug 21:00","12 Aug 05:00","12 Aug 13:00","12 Aug 21:00","13 Aug 05:00","13 Aug 13:00","13 Aug 21:00","14 Aug 05:00","14 Aug 13:00","14 Aug 21:00","15 Aug 05:00"];

const TOP = 89, SPLIT = 595, SUB = 597, BOTTOM = 850, LEFT = 10, RIGHT = 1859, ZERO = 683, STEP = 8;
const x = i => LEFT + i * STEP;
const rect = (a, b, w, h, c) => `<rect x="${a}" y="${b}" width="${w}" height="${h}" fill="${c}"/>`;
const dash = (a, b, c, d) => `<path d="M${a} ${b}L${c} ${d}" stroke="#778899" stroke-dasharray="3 3"/>`;
const text = (a, b, t, cls = "") => `<text x="${a}" y="${b}" class="${cls}">${t}</text>`;
let out = "";

for (let gx = LEFT + 32; gx < RIGHT; gx += 32) {
  out += dash(gx + .5, TOP + 1, gx + .5, SPLIT) + dash(gx + .5, SUB + 3, gx + .5, BOTTOM);
}
for (let i = 0; i < 15; i++) {
  const gy = 114 + Math.round(i * 32.08);
  out += dash(LEFT, gy + .5, RIGHT, gy + .5) + rect(RIGHT, gy, 4, 1, "#fff");
  // the current-price tag takes the place of the label it covers
  if (i !== 3) out += text(1865, gy + 4, (200.105 - i * .385).toFixed(3));
}
out += rect(LEFT, 208, RIGHT - LEFT, 1, "#778899");
volume.forEach((v, i) => { if (v) out += rect(x(i), SPLIT - v, 1, v, "#32cd32"); });
candles.forEach(([h, t, b, l, kind], i) => {
  out += rect(x(i), h, 1, Math.max(1, l - h), "#0f0");
  out += rect(x(i) - 2, t, 5, Math.max(1, b - t), "#0f0");
  if (b - t > 2) out += rect(x(i) - 1, +t + 1, 3, b - t - 2, kind === "f" ? "#fff" : "#000");
});
out += dash(LEFT, ZERO + .5, RIGHT, ZERO + .5);
macd.forEach((v, i) => { if (v) out += rect(x(i), v > 0 ? ZERO - v : ZERO + 1, 1, Math.abs(v), "#ff0"); });
let line = "";
for (let i = 0; i < signal.length; i += 2) line += `${x(signal[i])},${ZERO + .5 - signal[i + 1]} `;
out += `<polyline points="${line}" fill="none" stroke="#f00" stroke-dasharray="3 3"/>`;

out += rect(0, 87, LEFT, 785, "#000");
out += rect(LEFT, TOP, 1, SPLIT - TOP, "#fff") + rect(LEFT, SUB, 1, BOTTOM - SUB, "#fff");
out += rect(RIGHT, TOP, 1, BOTTOM - TOP + 1, "#fff");
for (const y of [TOP, SPLIT, SUB, BOTTOM]) out += rect(LEFT, y, RIGHT - LEFT, 1, "#fff");
out += rect(RIGHT, 598, 4, 1, "#fff") + rect(RIGHT, ZERO, 4, 1, "#fff") + rect(RIGHT, 849, 4, 1, "#fff");
out += text(1865, 606, "0.4861") + text(1865, 686, "0.0000") + text(1864, 848, "-0.9399");
times.forEach((t, i) => { out += rect(LEFT + i * 64, BOTTOM, 1, 5, "#fff") + text(LEFT + i * 64, 863, t); });
out += rect(1862, 203, 39, 11, "#778899") + text(1865, 212, "198.983", "mark");

// Quote panel and trade panel toggles beside the symbol name
out += rect(15, 95, 15, 11, "#fff") + rect(16, 96, 6, 9, "#e8503c") + rect(23, 96, 6, 9, "#3c86d8");
for (const y of [98, 101]) out += rect(16, y, 13, 1, "#fff");
out += `<path d="M36 95h5v5h4v-5h5v11H36z" fill="#bfe0ff"/><path d="M36 95h5v4l-2 3v4h-3z" fill="#e8503c"/><path d="M42 95h4v3h-4z" fill="#fff"/>`;
out += text(56, 104, "GBPJPY, H1:&#160; British Pound vs Japanese Yen", "symbol") + text(14, 610, "MACD(12,26,9) -0.1154 -0.0213");

document.getElementById("chart").innerHTML = `<g transform="translate(-8 -87)" shape-rendering="crispEdges">${out}</g>`;
document.getElementById("fast").select();
```
